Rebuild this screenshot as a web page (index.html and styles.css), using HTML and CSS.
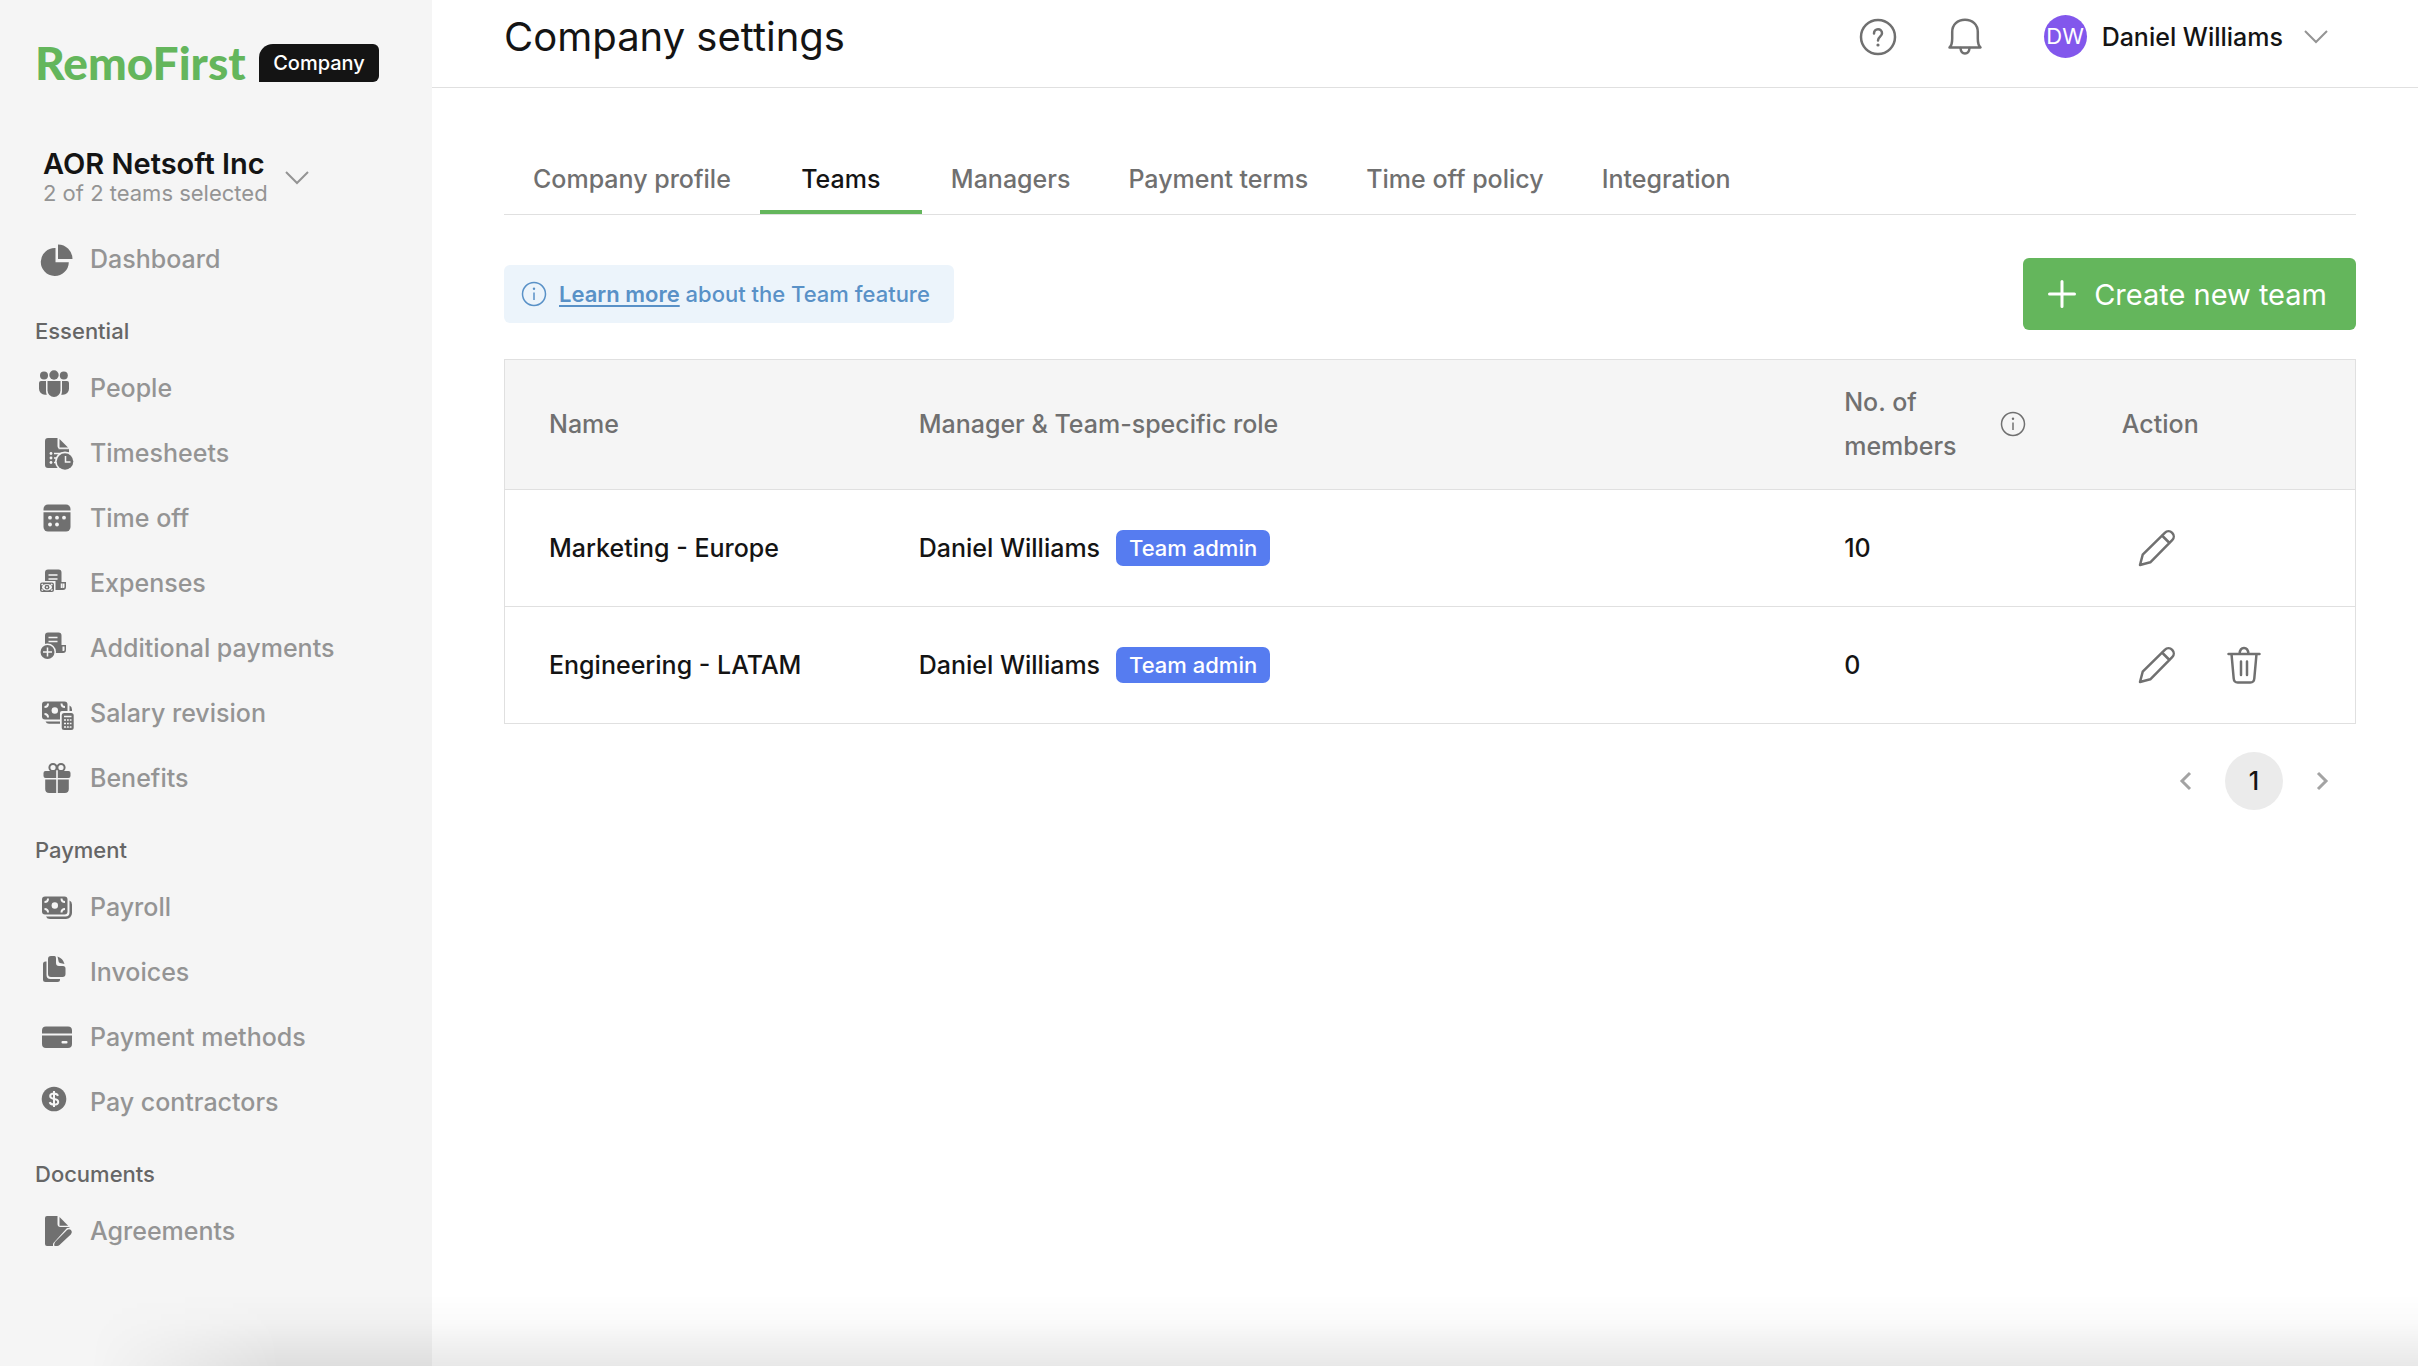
FILE: index.html
```html
<!DOCTYPE html>
<html lang="en">
<head>
    <meta charset="UTF-8">
    <meta name="viewport" content="width=device-width, initial-scale=1.0">
    <title>Company settings</title>
    <link rel="stylesheet" href="styles.css">
</head>
<body>
    <aside class="sidebar">
        <div class="brand">
            <a class="logo" href="#">RemoFirst</a>
            <span class="brand-tag">Company</span>
        </div>

        <button type="button" class="company-switch">
            <span class="company-text">
                <span class="company-name">AOR Netsoft Inc</span>
                <span class="company-teams">2 of 2 teams selected</span>
            </span>
            <svg class="chevron" viewBox="0 0 26 16"><path d="M2 2l11 11L24 2"/></svg>
        </button>

        <nav class="menu">
            <a class="menu-item" href="#">
                <svg class="menu-icon" viewBox="0 0 40 40"><path d="M19.500 9v14.200h13.300A14 14 0 1 1 19.500 9z"/><path d="M22 5.500a14.500 14.500 0 0 1 14.500 14.500H22z"/></svg>
                Dashboard
            </a>

            <h2 class="menu-title">Essential</h2>
            <a class="menu-item" href="#">
                <svg class="menu-icon" viewBox="0 0 40 40"><circle cx="8" cy="7.500" r="4"/><circle cx="18" cy="7" r="4.700"/><circle cx="27.800" cy="7.500" r="4"/><path d="M11.500 13h13v9.500a6.500 6.500 0 0 1-13 0z"/><path d="M5 13h5v10q0 2 .8 3.800H9a6 6 0 0 1-6-6V15a2 2 0 0 1 2-2z"/><path d="M31 13h-5v10q0 2-.8 3.800H27a6 6 0 0 0 6-6V15a2 2 0 0 0-2-2z"/></svg>
                People
            </a>
            <a class="menu-item" href="#">
                <svg class="menu-icon" viewBox="0 0 40 40"><path d="M12 5h9.500v8a2.500 2.500 0 0 0 2.500 2.500h9V35H12a3 3 0 0 1-3-3V8a3 3 0 0 1 3-3z"/><path d="M23.500 6l8.500 8.500h-8.500z"/><path class="cut" d="M22.500 15.200h11v1h-11z"/><circle class="cut" cx="15" cy="20.500" r="1.400"/><circle class="cut" cx="15" cy="25" r="1.400"/><circle class="cut" cx="15" cy="29.500" r="1.400"/><path class="cut-line" d="M18 20.500h15M18 25h5M18 29.500h3"/><circle class="cut" cx="29" cy="28.500" r="10"/><circle cx="29" cy="28.500" r="8.300"/><path class="cut-line" d="M29.500 23v6h5"/></svg>
                Timesheets
            </a>
            <a class="menu-item" href="#">
                <svg class="menu-icon" viewBox="0 0 40 40"><path d="M12 6.500h18a4.500 4.500 0 0 1 4.500 4.500v1.500h-27V11A4.500 4.500 0 0 1 12 6.500z"/><path d="M7.500 14.200h27V29a4.500 4.500 0 0 1-4.500 4.500H12A4.500 4.500 0 0 1 7.500 29z"/><g class="cut"><circle cx="14" cy="19.700" r="1.900"/><circle cx="21" cy="19.700" r="1.900"/><circle cx="28" cy="19.700" r="1.900"/><circle cx="14" cy="26.500" r="1.900"/><circle cx="21" cy="26.500" r="1.900"/></g></svg>
                Time off
            </a>
            <a class="menu-item" href="#">
                <svg class="menu-icon" viewBox="0 0 40 40"><path d="M12 6.500h10.500a3 3 0 0 1 3 3V19H30v5a3 3 0 0 1-3 3H15L9 22V9.500a3 3 0 0 1 3-3z"/><path class="cut-line" d="M12.500 12h9M12.500 16h9M25.500 20.500v4.500"/><path class="cut" d="M26.500 20.500h2v3.500q0 1-1 1h-1z"/><rect class="cut" x="2.500" y="18" width="17" height="12"/><rect x="4" y="19.500" width="14" height="9.500" rx="2"/><ellipse class="cut" cx="11" cy="24.200" rx="5" ry="3.300"/><path class="cut-line" d="M5.500 22l1.500-1M16.500 22l-1.500-1M5.500 26.500l1.500 1M16.500 26.500l-1.500 1"/><circle cx="11" cy="24.200" r="2.400"/><circle class="cut" cx="11" cy="24.200" r="1"/></svg>
                Expenses
            </a>
            <a class="menu-item" href="#">
                <svg class="menu-icon" viewBox="0 0 40 40"><path d="M12 4.500h10.500a3 3 0 0 1 3 3V17H30v5a3 3 0 0 1-3 3H15L9 20V7.500a3 3 0 0 1 3-3z"/><path class="cut-line" d="M12.500 9.500h9M12.500 13.500h9"/><path class="cut" d="M26.500 18.500h2v3.500q0 1-1 1h-1z"/><circle class="cut" cx="11.500" cy="24" r="8.500"/><circle cx="11.500" cy="24" r="7"/><path class="cut-line" d="M11.500 19.500v9M7 24h9"/></svg>
                Additional payments
            </a>
            <a class="menu-item" href="#">
                <svg class="menu-icon" viewBox="0 0 40 40"><rect x="6" y="8.500" width="25.500" height="18" rx="3"/><circle class="cut" cx="18.800" cy="17.500" r="3.200"/><path class="cut-line wide" d="M8.500 14q3.500 0 3.500-3.500M29 14q-3.500 0-3.500-3.500M8.500 21q3.500 0 3.500 3.500M29 21q-3.500 0-3.500 3.500"/><path d="M33.500 12.500q2.500 1 2.500 4V19h-2.500zM9.500 28.500h14.500v2.200H13q-2.500 0-3.500-2.200z"/><rect class="cut" x="24" y="18" width="15" height="20" rx="2"/><rect x="25.700" y="20" width="12" height="17" rx="2.500"/><path class="cut-line" d="M28 23.500h7.500M28 27h7.500M28 30.500h7.500M28 34h7.500"/><path d="M30 25.800h1v9h-1zM32.800 25.800h1v9h-1z"/></svg>
                Salary revision
            </a>
            <a class="menu-item" href="#">
                <svg class="menu-icon" viewBox="0 0 40 40"><circle class="ring" cx="17" cy="9.500" r="3.600"/><circle class="ring" cx="25" cy="9.500" r="3.600"/><path d="M9.500 13h10.700v7H9.500a2 2 0 0 1-2-2v-3a2 2 0 0 1 2-2zM21.800 13h10.700a2 2 0 0 1 2 2v3a2 2 0 0 1-2 2H21.800zM9.200 21.600h11V35h-7a4 4 0 0 1-4-4zM21.800 21.600h11V31a4 4 0 0 1-4 4h-7z"/></svg>
                Benefits
            </a>

            <h2 class="menu-title">Payment</h2>
            <a class="menu-item" href="#">
                <svg class="menu-icon" viewBox="0 0 40 40"><rect x="6" y="9.500" width="25.500" height="18" rx="3"/><circle class="cut" cx="18.800" cy="18.500" r="3.200"/><path class="cut-line wide" d="M8.500 15q3.500 0 3.500-3.500M29 15q-3.500 0-3.500-3.500M8.500 22q3.500 0 3.500 3.500M29 22q-3.500 0-3.500 3.500"/><path d="M33.500 13.500q2.500 1 2.500 4V26a6 6 0 0 1-6 6H14q-3 0-4-2.500h19.500a4 4 0 0 0 4-4z"/></svg>
                Payroll
            </a>
            <a class="menu-item" href="#">
                <svg class="menu-icon" viewBox="0 0 40 40"><path d="M10.500 9.500V23a4 4 0 0 0 4 4H24v.5a2.500 2.500 0 0 1-2.500 2.500H9.500A2.500 2.500 0 0 1 7 27.500V12a2.500 2.500 0 0 1 2.500-2.500z"/><path d="M15 4h3.500q1.500 0 1.500 2v5a3 3 0 0 0 3 3h4q2.500 0 2.500 2.500V22a3 3 0 0 1-3 3H15a3 3 0 0 1-3-3V7a3 3 0 0 1 3-3z"/><path d="M21.500 4.500q5.500 1.800 7 7.500L24 11q-1.500-.3-1.500-2z"/></svg>
                Invoices
            </a>
            <a class="menu-item" href="#">
                <svg class="menu-icon" viewBox="0 0 40 40"><path d="M10 9.500h22a4 4 0 0 1 4 4v3H6v-3a4 4 0 0 1 4-4zM6 18.500h30V27a4 4 0 0 1-4 4H10a4 4 0 0 1-4-4z"/><rect class="cut" x="25.500" y="24" width="6" height="2.400" rx="1"/></svg>
                Payment methods
            </a>
            <a class="menu-item" href="#">
                <svg class="menu-icon" viewBox="0 0 40 40"><circle cx="18" cy="17" r="12.300"/><path class="cut-line wide" d="M18 9v16M22 13.800q-.8-2.300-4-2.300-3.800 0-3.800 2.600 0 2.300 3.800 2.800 4.200.5 4.200 3 0 2.700-4.200 2.700-3.500 0-4.300-2.500"/></svg>
                Pay contractors
            </a>

            <h2 class="menu-title">Documents</h2>
            <a class="menu-item" href="#">
                <svg class="menu-icon" viewBox="0 0 40 40"><path d="M11 5h10.500v8a3 3 0 0 0 3 3H34L18 32v3h-7a2 2 0 0 1-2-2V7a2 2 0 0 1 2-2z"/><path d="M23.500 6l8.700 8.700h-8.700z"/><path class="cut" d="M17 37v-4.500L31 17l8-1v6L24 37z"/><path d="M19.500 30.500L31 19q2-1.500 4 0 1.800 2 0 4.200L23.500 34q-1 1-2.500 1h-2q-1 0-.8-1.500.3-2 1.300-3z"/></svg>
                Agreements
            </a>
        </nav>
    </aside>

    <div class="page">
        <header class="topbar">
            <h1>Company settings</h1>
            <div class="topbar-tools">
                <button type="button" class="icon-button" aria-label="Help">
                    <svg class="line-icon" viewBox="0 0 40 40"><circle cx="20" cy="20" r="17"/><path d="M16 16.500c0-2.500 1.700-4.200 4-4.200s4 1.600 4 3.900c0 3.300-4 3.500-4 7.300"/><circle class="dot" cx="20" cy="28" r="1.600"/></svg>
                </button>
                <button type="button" class="icon-button" aria-label="Notifications">
                    <svg class="line-icon" viewBox="0 0 40 40"><path d="M4.500 30.500c2.300-2 2.700-5 2.700-9V15C7.200 7.500 12.500 2.800 20 2.800S32.800 7.500 32.800 15v6.500c0 4 .4 7 2.700 9z"/><path d="M15.500 31c.3 3.700 2 5.500 4.500 5.500s4.200-1.800 4.500-5.500"/></svg>
                </button>
                <button type="button" class="user">
                    <span class="avatar">DW</span>
                    <span>Daniel Williams</span>
                    <svg class="chevron" viewBox="0 0 26 16"><path d="M2 2l11 11L24 2"/></svg>
                </button>
            </div>
        </header>

        <main class="content">
            <nav class="tabs">
                <a class="tab" href="#">Company profile</a>
                <a class="tab active" href="#">Teams</a>
                <a class="tab" href="#">Managers</a>
                <a class="tab" href="#">Payment terms</a>
                <a class="tab" href="#">Time off policy</a>
                <a class="tab" href="#">Integration</a>
            </nav>

            <div class="actions">
                <p class="notice">
                    <svg class="info-icon" viewBox="0 0 26 26"><circle cx="13" cy="13" r="11.500"/><path d="M13 11.500v7.500"/><circle class="dot" cx="13" cy="7.800" r="1.200"/></svg>
                    <span><a href="#">Learn more</a> about the Team feature</span>
                </p>
                <button type="button" class="create-button">
                    <svg class="plus-icon" viewBox="0 0 28 28"><path d="M14 1.500v25M1.500 14h25"/></svg>
                    Create new team
                </button>
            </div>

            <table class="teams">
                <thead>
                    <tr>
                        <th class="col-name">Name</th>
                        <th class="col-manager">Manager &amp; Team-specific role</th>
                        <th class="col-members">
                            <div class="members-head">
                                <span>No. of members</span>
                                <svg class="info-icon" viewBox="0 0 26 26"><circle cx="13" cy="13" r="11.500"/><path d="M13 11.500v7.500"/><circle class="dot" cx="13" cy="7.800" r="1.200"/></svg>
                            </div>
                        </th>
                        <th class="col-action">Action</th>
                    </tr>
                </thead>
                <tbody>
                    <tr>
                        <td>Marketing - Europe</td>
                        <td><div class="manager">Daniel Williams <span class="role">Team admin</span></div></td>
                        <td>10</td>
                        <td>
                            <div class="row-actions">
                                <button type="button" class="icon-button" aria-label="Edit Marketing - Europe">
                                    <svg class="line-icon" viewBox="0 0 40 40"><path d="M3 37l2.700-10.300L27.800 4.800a5.200 5.200 0 0 1 7.400 7.400L13.300 34.300zM25 7.500l7.500 7.500"/></svg>
                                </button>
                            </div>
                        </td>
                    </tr>
                    <tr>
                        <td>Engineering - LATAM</td>
                        <td><div class="manager">Daniel Williams <span class="role">Team admin</span></div></td>
                        <td>0</td>
                        <td>
                            <div class="row-actions">
                                <button type="button" class="icon-button" aria-label="Edit Engineering - LATAM">
                                    <svg class="line-icon" viewBox="0 0 40 40"><path d="M3 37l2.700-10.300L27.800 4.800a5.200 5.200 0 0 1 7.400 7.400L13.300 34.300zM25 7.500l7.500 7.500"/></svg>
                                </button>
                                <button type="button" class="icon-button" aria-label="Delete Engineering - LATAM">
                                    <svg class="line-icon" viewBox="0 0 40 40"><path d="M4.500 9h31M7.500 9l2.200 24.500q.3 4 4 4h12.600q3.700 0 4-4L32.500 9M15.500 9c.3-4 2-6 4.500-6s4.200 2 4.500 6M17 16.500v13.500M23 16.500v13.500"/></svg>
                                </button>
                            </div>
                        </td>
                    </tr>
                </tbody>
            </table>

            <nav class="pagination" aria-label="Pagination">
                <button type="button" class="page-arrow" aria-label="Previous page">
                    <svg viewBox="0 0 14 22"><path d="M11 3L3 11l8 8"/></svg>
                </button>
                <button type="button" class="page-number">1</button>
                <button type="button" class="page-arrow" aria-label="Next page">
                    <svg viewBox="0 0 14 22"><path d="M3 3l8 8-8 8"/></svg>
                </button>
            </nav>
        </main>
    </div>

    <div class="bottom-shade"></div>
</body>
</html>
```
FILE: styles.css
```css
* {
    box-sizing: border-box;
}

body {
    margin: 0;
    display: flex;
    min-height: 100vh;
    background-color: #fff;
    color: #141414;
    font-family: Inter, "Liberation Sans", sans-serif;
    font-size: 25px;
    font-weight: 500;
}

a {
    color: inherit;
    text-decoration: none;
}

button {
    padding: 0;
    border: none;
    background: none;
    color: inherit;
    font: inherit;
    cursor: pointer;
}

svg {
    display: block;
    flex: none;
}

/* Sidebar */
.sidebar {
    flex: none;
    width: 432px;
    padding-top: 44px;
    background-color: #f5f5f5;
}

.brand {
    display: flex;
    align-items: center;
    justify-content: space-between;
    height: 38px;
    padding: 0 53px 0 35px;
}

.logo {
    color: #64b65c;
    font-family: Lato, sans-serif;
    font-size: 46px;
    font-weight: 900;
    line-height: 38px;
}

.brand-tag {
    width: 120px;
    border-radius: 14px 6px 6px 0;
    background-color: #141414;
    color: #fff;
    font-size: 20px;
    line-height: 38px;
    text-align: center;
}

.company-switch {
    display: flex;
    align-items: center;
    gap: 16px;
    margin-top: 64px;
    padding-left: 43px;
    text-align: left;
}

.company-text {
    display: flex;
    flex-direction: column;
}

.company-name {
    font-size: 29px;
    font-weight: 600;
    line-height: 36px;
}

.company-teams {
    color: #949494;
    font-size: 22px;
    font-weight: 400;
    line-height: 22px;
}

.chevron {
    width: 26px;
    height: 16px;
    fill: none;
    stroke: #949494;
    stroke-width: 2;
}

.company-switch .chevron {
    margin-top: 6px;
}

.menu {
    margin-top: 22px;
}

.menu-item {
    display: flex;
    align-items: center;
    gap: 14px;
    height: 65px;
    padding-left: 36px;
    color: #949494;
}

.menu-icon {
    width: 40px;
    height: 40px;
    fill: #707070;
}

.menu-icon .cut {
    fill: #f5f5f5;
}

.menu-icon .cut-line {
    fill: none;
    stroke: #f5f5f5;
    stroke-width: 1.5;
}

.menu-icon .wide {
    stroke-width: 2;
}

.menu-icon .ring {
    fill: none;
    stroke: #707070;
    stroke-width: 2;
}

.menu-title {
    height: 64px;
    margin: 0;
    padding: 27px 0 0 35px;
    color: #666;
    font-size: 22px;
    font-weight: 500;
    line-height: 26px;
}

/* Page */
.page {
    flex: 1;
    min-width: 0;
}

.topbar {
    display: flex;
    align-items: center;
    justify-content: space-between;
    height: 88px;
    padding: 0 89px 14px 72px;
    border-bottom: 1px solid #e0e0e0;
}

.topbar h1 {
    margin: 0;
    font-size: 40px;
    font-weight: 400;
    line-height: 52px;
}

.topbar-tools {
    display: flex;
    align-items: center;
    gap: 47px;
}

.icon-button {
    width: 40px;
    height: 40px;
}

.line-icon {
    width: 40px;
    height: 40px;
    fill: none;
    stroke: #707070;
    stroke-width: 2.5;
    stroke-linecap: round;
    stroke-linejoin: round;
}

.line-icon .dot {
    fill: #707070;
    stroke: none;
}

.user {
    display: flex;
    align-items: center;
    gap: 15px;
    margin-left: 12px;
}

.user .chevron {
    margin-left: 5px;
}

.avatar {
    width: 43px;
    border-radius: 50%;
    background-color: #8257ec;
    color: #fff;
    font-size: 22px;
    font-weight: 400;
    line-height: 43px;
    text-align: center;
}

.content {
    padding: 60px 62px 0 72px;
}

.tabs {
    display: flex;
    border-bottom: 1px solid #e0e0e0;
}

.tab {
    min-width: 162px;
    padding: 0 29px;
    border-bottom: 4px solid transparent;
    color: #707070;
    line-height: 62px;
    text-align: center;
}

.tab.active {
    border-bottom-color: #64b65c;
    color: #141414;
}

.actions {
    display: flex;
    align-items: center;
    justify-content: space-between;
    margin: 43px 0 29px;
}

.notice {
    display: flex;
    align-items: center;
    gap: 12px;
    height: 58px;
    margin: 0;
    padding: 0 24px 0 17px;
    border-radius: 6px;
    background-color: #ecf4fb;
    color: #5991c7;
    font-size: 22px;
}

.notice a {
    font-weight: 600;
    text-decoration: underline;
    text-decoration-thickness: 2px;
    text-underline-offset: 3px;
}

.info-icon {
    width: 26px;
    height: 26px;
    fill: none;
    stroke: currentColor;
    stroke-width: 1.5;
}

.info-icon .dot {
    fill: currentColor;
    stroke: none;
}

.create-button {
    display: flex;
    align-items: center;
    gap: 18px;
    height: 72px;
    padding: 0 29px 0 25px;
    border-radius: 6px;
    background-color: #64b65c;
    color: #fff;
    font-size: 29px;
    font-weight: 400;
}

.plus-icon {
    width: 28px;
    height: 28px;
    fill: none;
    stroke: #fff;
    stroke-width: 3;
    stroke-linecap: round;
}

/* Teams table */
.teams {
    width: 100%;
    border: 1px solid #e0e0e0;
    border-collapse: collapse;
    table-layout: fixed;
}

.teams tr {
    border-bottom: 1px solid #e0e0e0;
}

.teams th,
.teams td {
    height: 117px;
    padding: 0 44px;
    font-weight: 500;
    text-align: left;
}

.teams th {
    height: 130px;
    padding-bottom: 2px;
    background-color: #f5f5f5;
    color: #707070;
    line-height: 44px;
}

.col-name {
    width: 20%;
}

.col-manager {
    width: 50%;
}

.col-members,
.col-action {
    width: 15%;
}

.members-head {
    display: flex;
    align-items: center;
    justify-content: space-between;
    margin-right: 8px;
}

.members-head span {
    width: 120px;
}

.manager {
    display: flex;
    align-items: center;
    gap: 16px;
}

.role {
    padding: 0 13px;
    border-radius: 7px;
    background-color: #567cf0;
    color: #fff;
    font-size: 22px;
    line-height: 36px;
}

.row-actions {
    display: flex;
    gap: 47px;
    padding-left: 15px;
}

.pagination {
    display: flex;
    align-items: center;
    justify-content: flex-end;
    gap: 32px;
    margin: 28px 27px 0 0;
}

.page-arrow svg {
    width: 14px;
    height: 22px;
    fill: none;
    stroke: #a3a3a3;
    stroke-width: 3;
}

.page-number {
    width: 58px;
    height: 58px;
    border-radius: 50%;
    background-color: #ebebeb;
}

/* Soft shade along the bottom edge of the window */
.bottom-shade {
    position: fixed;
    right: 0;
    bottom: 0;
    left: 0;
    height: 72px;
    background: linear-gradient(to bottom, rgba(0, 0, 0, 0), rgba(0, 0, 0, 0.02) 40%, rgba(0, 0, 0, 0.09));
    mask-image: linear-gradient(to right, transparent 90px, #000 280px);
    pointer-events: none;
}
```
